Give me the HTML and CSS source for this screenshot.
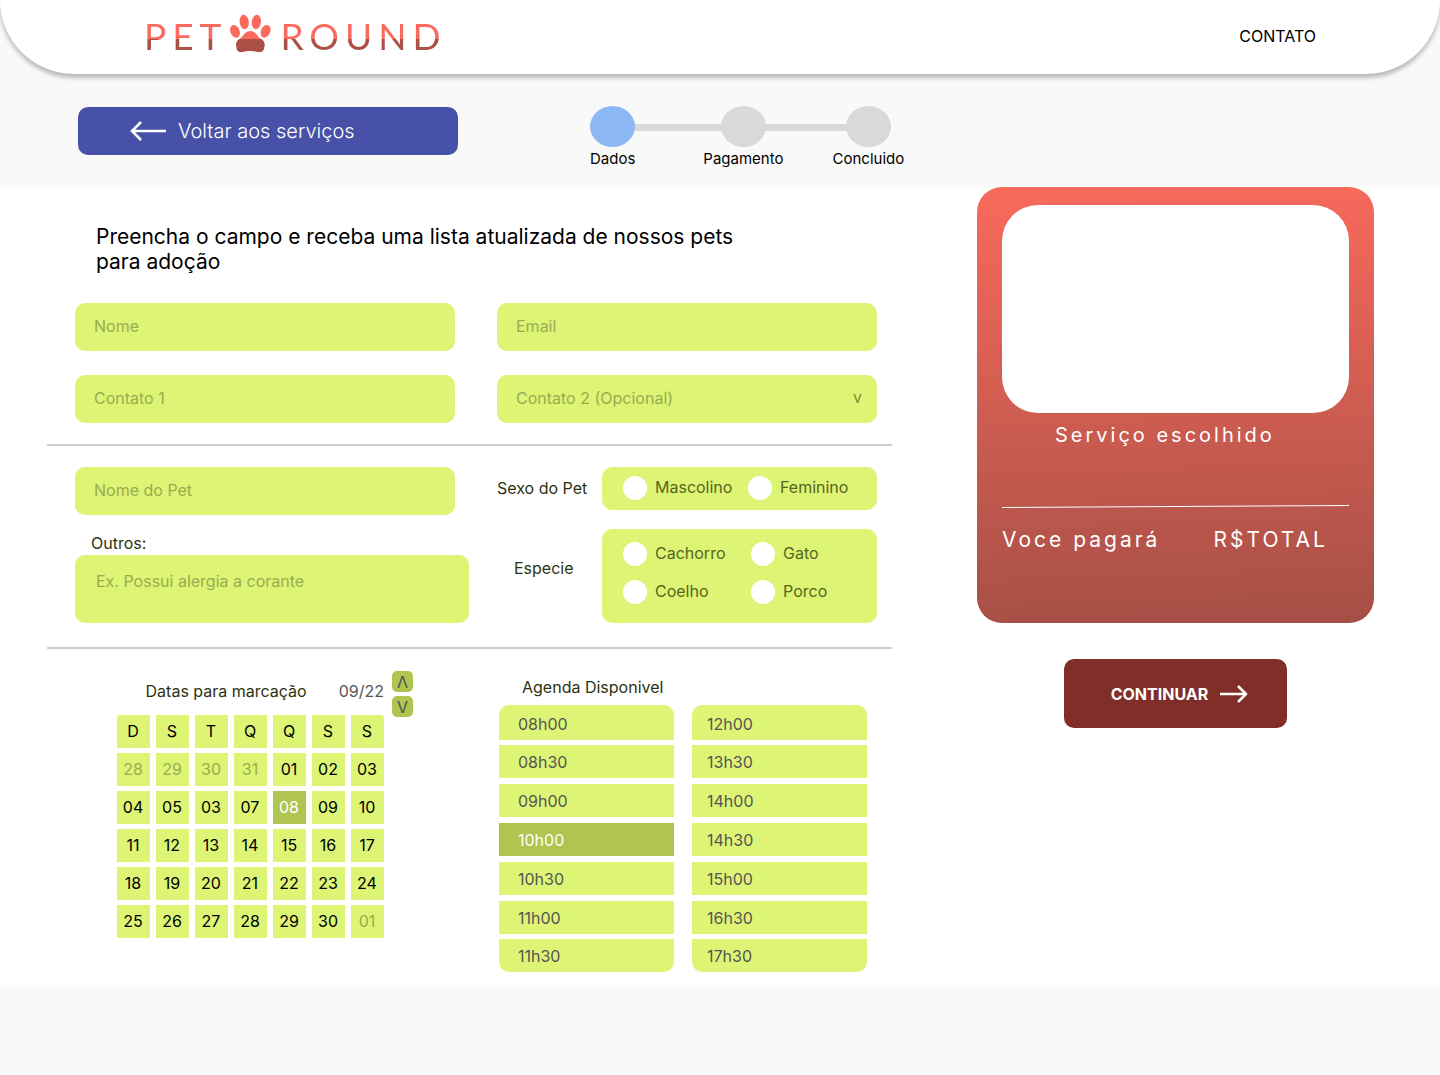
FILE: index.html
```html
<!DOCTYPE html>
<html lang="pt-BR">
<head>
<meta charset="utf-8">
<meta name="viewport" content="width=device-width, initial-scale=1">
<title>Pet Round - Dados</title>
<link rel="stylesheet" href="styles.css">
</head>
<body>
<header class="site-header">
  <a class="logo" href="#" aria-label="Pet Round">
    <span class="logo-word">PET</span>
    <svg class="logo-paw" width="42" height="39" viewBox="229 14 42 39" aria-hidden="true">
      <g fill="#fb6a5c">
        <ellipse cx="234" cy="31.300" rx="4.600" ry="6.600" transform="rotate(-22 234 31.300)"/>
        <ellipse cx="243.200" cy="22" rx="4.600" ry="7.200" transform="rotate(-8 243.200 22)"/>
        <ellipse cx="255.400" cy="22" rx="4.600" ry="7.200" transform="rotate(8 255.400 22)"/>
        <ellipse cx="264.600" cy="31.300" rx="4.600" ry="6.600" transform="rotate(22 264.600 31.300)"/>
        <path d="M249.300 31c4 0 6.200 3.300 8 5.500 1 1.200 1.900 2 2.900 2.500h-21.800c1-.5 2-1.300 2.900-2.500 1.800-2.200 4-5.500 8-5.500z"/>
      </g>
      <path fill="#aa5047" d="M238.400 39h21.800c2.200 1.300 3.600 3.300 3.500 6.200l-.9 4.300c-.8 2.200-3 3-5.200 2.600-2.800-.5-5.300-1.100-8.300-1.100s-5.500.6-8.300 1.100c-2.200.4-4.400-.4-5.200-2.600l-.8-4.300c-.1-2.900 1.200-4.900 3.400-6.200z"/>
    </svg>
    <span class="logo-word">ROUND</span>
  </a>
  <nav><a class="nav-link" href="#contato">CONTATO</a></nav>
</header>

<div class="topbar">
  <a class="back" href="#servicos">
    <svg width="38" height="22" viewBox="0 0 38 22" fill="none" stroke="#fff" stroke-width="2.500" aria-hidden="true"><path d="M37 11H3M12 2L3 11l9 9"/></svg>
    Voltar aos serviços
  </a>
  <ol class="steps">
    <li class="step step-current" aria-current="step"><span class="dot"></span>Dados</li>
    <li class="step"><span class="dot"></span>Pagamento</li>
    <li class="step"><span class="dot"></span>Concluido</li>
  </ol>
</div>

<main class="page">
  <form class="form" id="dados">
    <h1 class="intro">Preencha o campo e receba uma lista atualizada de nossos pets para adoção</h1>

    <div class="contact">
      <input class="field" type="text" placeholder="Nome" aria-label="Nome">
      <input class="field" type="email" placeholder="Email" aria-label="Email">
      <input class="field" type="tel" placeholder="Contato 1" aria-label="Contato 1">
      <div class="select">
        <select class="field" aria-label="Contato 2 (Opcional)"><option>Contato 2 (Opcional)</option></select>
        <span class="select-mark" aria-hidden="true">v</span>
      </div>
    </div>

    <hr class="rule">

    <div class="pet">
      <div class="pet-text">
        <input class="field field-pet" type="text" placeholder="Nome do Pet" aria-label="Nome do Pet">
        <label class="label label-other" for="outros">Outros:</label>
        <textarea class="field field-area" id="outros" placeholder="Ex. Possui alergia a corante"></textarea>
      </div>
      <div class="pet-options">
        <span class="label label-sex" id="sexo">Sexo do Pet</span>
        <div class="options options-sex" role="radiogroup" aria-labelledby="sexo">
          <label class="option"><input type="radio" name="sexo"><span>Mascolino</span></label>
          <label class="option"><input type="radio" name="sexo"><span>Feminino</span></label>
        </div>
        <span class="label label-species" id="especie">Especie</span>
        <div class="options options-species" role="radiogroup" aria-labelledby="especie">
          <label class="option"><input type="radio" name="especie"><span>Cachorro</span></label>
          <label class="option"><input type="radio" name="especie"><span>Gato</span></label>
          <label class="option"><input type="radio" name="especie"><span>Coelho</span></label>
          <label class="option"><input type="radio" name="especie"><span>Porco</span></label>
        </div>
      </div>
    </div>

    <hr class="rule">

    <div class="booking">
      <section class="calendar">
        <div class="calendar-head">
          <h2 class="label">Datas para marcação</h2>
          <span class="month">09/22</span>
          <div class="month-nav">
            <button class="month-btn" type="button" aria-label="Mês anterior">Λ</button>
            <button class="month-btn" type="button" aria-label="Próximo mês">V</button>
          </div>
        </div>
        <table class="days">
          <thead><tr><th>D</th><th>S</th><th>T</th><th>Q</th><th>Q</th><th>S</th><th>S</th></tr></thead>
          <tbody>
            <tr><td class="out">28</td><td class="out">29</td><td class="out">30</td><td class="out">31</td><td>01</td><td>02</td><td>03</td></tr>
            <tr><td>04</td><td>05</td><td>03</td><td>07</td><td class="picked">08</td><td>09</td><td>10</td></tr>
            <tr><td>11</td><td>12</td><td>13</td><td>14</td><td>15</td><td>16</td><td>17</td></tr>
            <tr><td>18</td><td>19</td><td>20</td><td>21</td><td>22</td><td>23</td><td>24</td></tr>
            <tr><td>25</td><td>26</td><td>27</td><td>28</td><td>29</td><td>30</td><td class="out">01</td></tr>
          </tbody>
        </table>
      </section>
      <section class="agenda">
        <h2 class="label agenda-title">Agenda Disponivel</h2>
        <div class="slots">
          <div class="slot-column">
            <button class="slot" type="button">08h00</button>
            <button class="slot" type="button">08h30</button>
            <button class="slot" type="button">09h00</button>
            <button class="slot picked" type="button" aria-pressed="true">10h00</button>
            <button class="slot" type="button">10h30</button>
            <button class="slot" type="button">11h00</button>
            <button class="slot" type="button">11h30</button>
          </div>
          <div class="slot-column">
            <button class="slot" type="button">12h00</button>
            <button class="slot" type="button">13h30</button>
            <button class="slot" type="button">14h00</button>
            <button class="slot" type="button">14h30</button>
            <button class="slot" type="button">15h00</button>
            <button class="slot" type="button">16h30</button>
            <button class="slot" type="button">17h30</button>
          </div>
        </div>
      </section>
    </div>
  </form>

  <aside class="side">
    <section class="summary">
      <div class="summary-photo"></div>
      <p class="summary-name">Serviço escolhido</p>
      <svg class="summary-line" height="3" viewBox="0 0 347 3" preserveAspectRatio="none" aria-hidden="true"><path d="M0 2.500L347 .5" stroke="#fff" fill="none"/></svg>
      <p class="summary-total"><span>Voce pagará</span><span>R$TOTAL</span></p>
    </section>
    <button class="continue" type="submit" form="dados">
      CONTINUAR
      <svg width="28" height="18" viewBox="0 0 28 18" fill="none" stroke="#fff" stroke-width="2.500" aria-hidden="true"><path d="M0 9h26M18 1l8 8-8 8"/></svg>
    </button>
  </aside>
</main>
</body>
</html>
```
FILE: styles.css
```css
* {
  box-sizing: border-box;
}

body {
  margin: 0;
  background: #f9f9f9;
  color: #000;
  font: 16px/20px Inter, "Liberation Sans", sans-serif;
}

button,
input,
select,
textarea {
  font: inherit;
  color: inherit;
  border: 0;
  margin: 0;
}

h1,
h2,
p,
ol {
  margin: 0;
  padding: 0;
  font-weight: 400;
}

/* Header */
.site-header {
  display: flex;
  align-items: center;
  justify-content: space-between;
  height: 74px;
  padding: 0 124px 0 144px;
  background: #fff;
  border-radius: 0 0 74px 74px;
  box-shadow: 0 4px 4px rgba(0, 0, 0, 0.25);
}

.logo {
  display: flex;
  align-items: center;
  text-decoration: none;
  padding-bottom: 7px;
}

.logo-word {
  font: 37px/40px Lato, sans-serif;
  letter-spacing: 6px;
  padding-top: 5px;
  color: transparent;
  background: linear-gradient(#fb6a5c 28px, #aa5047 28px);
  -webkit-background-clip: text;
  background-clip: text;
}

.logo-paw {
  margin: 0 8px 0 3px;
}

.nav-link {
  display: block;
  padding-bottom: 2px;
  color: #000;
  text-decoration: none;
}

/* Back button and progress */
.topbar {
  display: flex;
  align-items: flex-start;
  gap: 132px;
  padding: 32px 78px 18px;
}

.back {
  display: flex;
  align-items: center;
  gap: 11px;
  width: 380px;
  height: 48px;
  margin-top: 1px;
  padding-left: 51px;
  border-radius: 10px;
  background: #4751a8;
  color: #fff;
  font-size: 20px;
  font-weight: 300;
  text-decoration: none;
}

.steps {
  display: flex;
  list-style: none;
  font-size: 15px;
  background: linear-gradient(#d9d9d9, #d9d9d9) no-repeat 22px 18px / calc(100% - 57px) 7px;
}

.step {
  display: flex;
  flex-direction: column;
  align-items: center;
  gap: 2px;
}

.step:nth-child(2) {
  margin-left: 68px;
}

.step:nth-child(3) {
  margin-left: 49px;
}

.dot {
  width: 45px;
  height: 41px;
  border-radius: 50%;
  background: #d9d9d9;
}

.step-current .dot {
  background: #8cb9f5;
}

/* Page grid */
.page {
  display: grid;
  grid-template-columns: minmax(0, 1fr) 397px;
  align-items: start;
  column-gap: 85px;
  padding: 0 66px 15px 47px;
  background: #fff;
}

.intro {
  max-width: 720px;
  padding: 37px 0 29px 49px;
  font-size: 21px;
  line-height: 25px;
}

.label {
  font-size: 16px;
  color: #2b3310;
}

.rule {
  height: 2px;
  margin: 0;
  border: 0;
  background: #cdcdcd;
}

/* Fields */
.field {
  display: block;
  width: 100%;
  height: 48px;
  padding: 0 19px 2px;
  border-radius: 10px;
  background: #ddf474;
}

.field::placeholder {
  color: #9bab51;
  opacity: 1;
}

.contact {
  display: grid;
  grid-template-columns: 1fr 1fr;
  gap: 24px 42px;
  padding: 0 15px 21px 28px;
}

.select {
  position: relative;
}

.select .field {
  appearance: none;
  color: #9bab51;
}

.select-mark {
  position: absolute;
  top: 12px;
  right: 15px;
  color: #7e8d35;
  pointer-events: none;
}

.pet {
  display: grid;
  grid-template-columns: 394fr 380fr;
  column-gap: 28px;
  padding: 21px 15px 24px 28px;
}

.pet-text {
  display: flex;
  flex-direction: column;
}

.field-pet {
  width: auto;
  margin-right: 14px;
}

.label-other {
  padding: 18px 16px 2px;
}

.field-area {
  height: 68px;
  padding: 16px 21px;
  resize: none;
}

.pet-options {
  display: grid;
  grid-template-columns: 105px minmax(0, 1fr);
  grid-template-rows: 43px 94px;
  row-gap: 19px;
  align-items: center;
}

.label-sex {
  padding-bottom: 2px;
}

.label-species {
  padding: 0 0 16px 17px;
}

.options {
  display: grid;
  align-self: stretch;
  align-content: start;
  row-gap: 14px;
  padding: 9px 21px;
  border-radius: 10px;
  background: #ddf474;
  color: #56661e;
}

.options-sex {
  grid-template-columns: 125px 1fr;
}

.options-species {
  grid-template-columns: 128px 1fr;
  padding-top: 13px;
}

.option {
  display: flex;
  align-items: center;
  gap: 8px;
}

.option span {
  padding-bottom: 2px;
}

.option input {
  appearance: none;
  width: 24px;
  height: 24px;
  border-radius: 50%;
  background: #fff;
}

.option input:checked {
  border: 7px solid #fff;
  background: #56661e;
}

/* Calendar */
.booking {
  display: grid;
  grid-template-columns: 388px minmax(0, 1fr);
  column-gap: 64px;
  padding: 22px 25px 0 0;
}

.calendar {
  padding-left: 64px;
}

.calendar-head {
  display: flex;
  justify-content: flex-end;
  align-items: center;
  height: 39px;
  padding-right: 22px;
}

.month {
  margin: 0 8px 0 32px;
  color: #555;
}

.month-nav {
  display: grid;
  gap: 4px;
  margin-top: 7px;
}

.month-btn {
  width: 21px;
  height: 21px;
  padding: 0;
  border-radius: 5px;
  background: #b0c450;
  color: #4d5352;
}

.days {
  border-spacing: 6px 5px;
  text-align: center;
}

.days th,
.days td {
  width: 33px;
  height: 33px;
  padding: 0 1px 2px 0;
  background: #ddf474;
  font-weight: 400;
}

.days tr:first-child th:first-child {
  border-top-left-radius: 3px;
}

.days tr:first-child th:last-child {
  border-top-right-radius: 3px;
}

.days .out {
  color: #9bab51;
}

.days .picked,
.slot.picked {
  background: #b0c450;
  color: #fff;
}

/* Agenda */
.agenda-title {
  padding: 6px 0 8px 23px;
}

.slots {
  display: grid;
  grid-template-columns: 1fr 1fr;
  column-gap: 18px;
}

.slot {
  display: block;
  width: 100%;
  height: 33px;
  margin-top: 6px;
  padding: 0 19px;
  background: #ddf474;
  color: #555;
  text-align: left;
}

.slot-column:last-child .slot {
  padding-left: 15px;
}

.slot:first-child {
  height: 35px;
  margin-top: 0;
  padding-top: 2px;
  border-radius: 10px 10px 0 0;
}

.slot:nth-child(2) {
  margin-top: 5px;
}

.slot:last-child {
  margin-top: 5px;
  border-radius: 0 0 10px 10px;
}

/* Summary */
.side {
  display: flex;
  flex-direction: column;
  align-items: center;
  gap: 36px;
}

.summary {
  width: 100%;
  min-height: 436px;
  padding: 18px 25px;
  border-radius: 25px;
  background: linear-gradient(178deg, #f96a5c, #a54f46);
  color: #fff;
  font-size: 20px;
  font-weight: 300;
  line-height: 24px;
  letter-spacing: 3px;
}

.summary-photo {
  height: 208px;
  border-radius: 36px;
  background: #fff;
}

.summary-name {
  padding: 10px 53px 58px;
}

.summary-line {
  display: block;
  width: 100%;
}

.summary-total {
  display: flex;
  justify-content: space-between;
  padding: 20px 21px 0 0;
  font-size: 21px;
}

.continue {
  display: flex;
  align-items: center;
  gap: 12px;
  height: 69px;
  padding: 0 39px 0 47px;
  border-radius: 10px;
  background: #802e27;
  color: #fff;
  font-weight: 700;
}
```
